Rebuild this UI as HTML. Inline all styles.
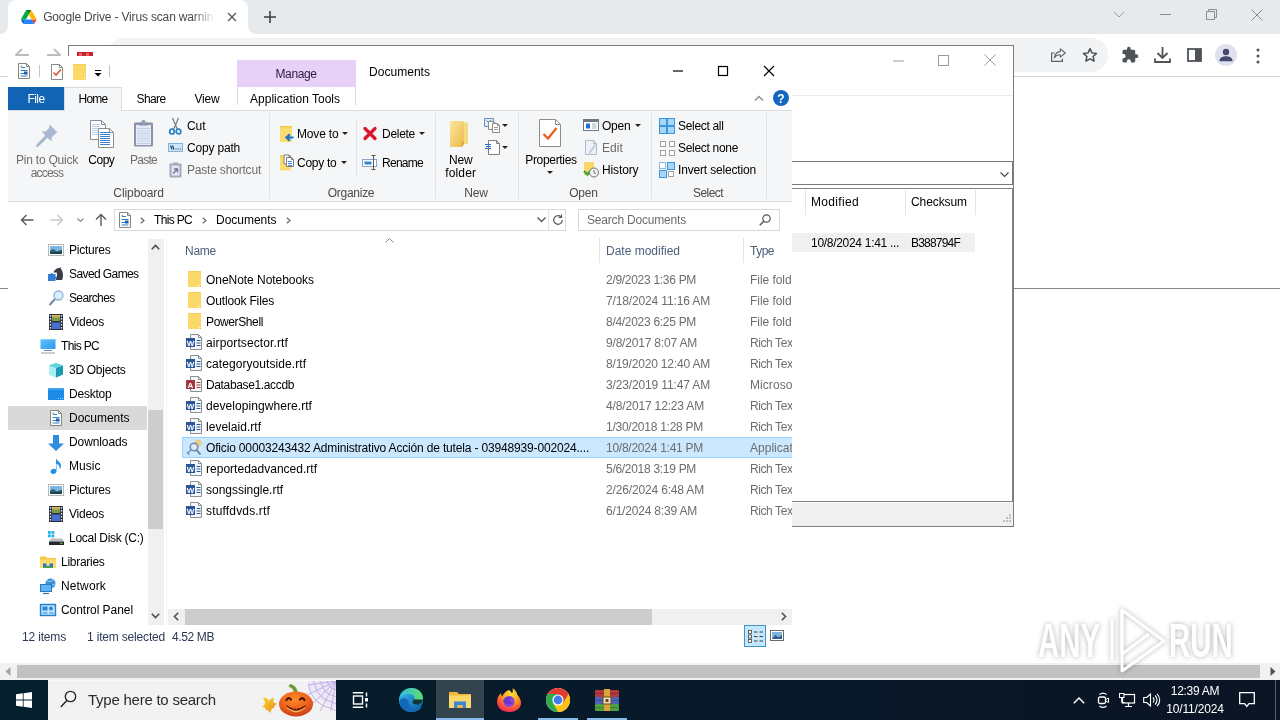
<!DOCTYPE html>
<html lang="en">
<head>
<meta charset="utf-8">
<title>Google Drive - Virus scan warning</title>
<style>
*{box-sizing:border-box;margin:0;padding:0}
html,body{width:1280px;height:720px;overflow:hidden;background:#fff}
body{position:relative;font-family:"Liberation Sans",sans-serif;font-size:12px;color:#000}
.a{position:absolute}
.t{position:absolute;white-space:nowrap;line-height:16px;height:16px}
svg{position:absolute;overflow:visible}
.w{position:absolute;overflow:hidden}
#root{position:absolute;left:0;top:0;width:1280px;height:720px;will-change:transform}

</style>
</head>
<body>
<div id="root">
<!-- CHROME -->
<div class="a" style="left:0px;top:0px;width:1280px;height:34px;background:#e7eaed;"></div>
<div class="a" style="left:8px;top:0;width:240px;height:34px;background:#fff;border-radius:8px 8px 0 0"></div>
<svg style="left:0;top:26px" width="8" height="8"><path d="M8 0v8H0a8 8 0 0 0 8-8z" fill="#fff"/></svg>
<svg style="left:248px;top:26px" width="8" height="8"><path d="M0 0v8h8a8 8 0 0 1-8-8z" fill="#fff"/></svg>
<svg style="left:21px;top:9.5px" width="15.500" height="14" viewBox="0 0 87.3 78"><path d="M6.6 66.85l3.85 6.65c.8 1.4 1.95 2.5 3.3 3.3L27.5 53H0c0 1.55.4 3.1 1.2 4.5z" fill="#0066da"/><path d="M43.65 25L29.9 1.2c-1.35.8-2.5 1.9-3.3 3.3L1.2 48.5C.4 49.9 0 51.45 0 53h27.5z" fill="#00ac47"/><path d="M73.55 76.8c1.35-.8 2.5-1.9 3.3-3.3l1.6-2.75L86.1 57.5c.8-1.4 1.2-2.95 1.2-4.5H59.8l5.85 11.5z" fill="#ea4335"/><path d="M43.65 25L57.4 1.2C56.05.4 54.5 0 52.9 0H34.4c-1.6 0-3.15.45-4.5 1.2z" fill="#00832d"/><path d="M59.8 53H27.5L13.75 76.8c1.35.8 2.9 1.2 4.5 1.2h50.8c1.6 0 3.15-.45 4.5-1.2z" fill="#2684fc"/><path d="M73.4 26.5L60.7 4.5c-.8-1.4-1.95-2.5-3.3-3.3L43.65 25 59.8 53h27.45c0-1.55-.4-3.1-1.2-4.5z" fill="#ffba00"/></svg>
<span class="t" style="left:43.20px;top:8.50px;letter-spacing:-0.162px;color:#45494d;-webkit-mask-image:linear-gradient(90deg,#000 150px,transparent 172px);mask-image:linear-gradient(90deg,#000 150px,transparent 172px);">Google Drive - Virus scan warnin</span>
<svg style="left:227px;top:12px" width="10" height="10" viewBox="0 0 10 10"><path d="M1 1l8 8M9 1l-8 8" stroke="#5f6368" stroke-width="1.5" fill="none"/></svg>
<svg style="left:263px;top:10px" width="14" height="14" viewBox="0 0 14 14"><path d="M7 1v12M1 7h12" stroke="#3c4043" stroke-width="1.6" fill="none"/></svg>
<svg style="left:1113px;top:11px" width="12" height="8" viewBox="0 0 12 8"><path d="M1 1l5 5 5-5" stroke="#9a9da1" stroke-width="1" fill="none"/></svg>
<svg style="left:1160px;top:14px" width="11" height="2" viewBox="0 0 11 2"><path d="M0 .5h11" stroke="#8a8d91" stroke-width="1" fill="none"/></svg>
<svg style="left:1206px;top:9px" width="11" height="11" viewBox="0 0 11 11"><path d="M.5 2.5h8v8h-8zM2.5 2.5v-2h8v8h-2" stroke="#8a8d91" stroke-width="1" fill="none"/></svg>
<svg style="left:1251px;top:9px" width="12" height="12" viewBox="0 0 12 12"><path d="M.5.5l11 11M11.500 .5l-11 11" stroke="#8a8d91" stroke-width="1" fill="none"/></svg>
<div class="a" style="left:0px;top:34px;width:1280px;height:43px;background:#fff;border-bottom:1px solid #d2d4d7"></div>
<div class="a" style="left:107px;top:38px;width:1001px;height:34px;border-radius:17px;background:#f1f3f4"></div>
<svg style="left:14px;top:47px" width="16" height="16" viewBox="0 0 16 16"><path d="M15 8H2M8 2L2 8l6 6" stroke="#babcbe" stroke-width="1.8" fill="none"/></svg>
<svg style="left:46px;top:47px" width="16" height="16" viewBox="0 0 16 16"><path d="M1 8h13M8 2l6 6-6 6" stroke="#babcbe" stroke-width="1.8" fill="none"/></svg>
<svg style="left:1051px;top:48px" width="15" height="14" viewBox="0 0 15 14"><path d="M3.500 5H.600v8.400h10.800v-3" stroke="#5f6368" stroke-width="1.200" fill="none"/><path d="M9.300 .800l5 4.200-5 4.200V6.800C6.300 6.800 4.500 7.800 3.300 10 3.700 6.500 5.800 4 9.300 3.400z" stroke="#5f6368" stroke-width="1.100" fill="none" stroke-linejoin="round"/></svg>
<svg style="left:1082px;top:47px" width="16" height="16" viewBox="0 0 24 24"><path d="M12 2.500l2.900 6.300 6.900.8-5.100 4.700 1.400 6.800L12 17.700l-6.100 3.400 1.400-6.800L2.200 9.600l6.900-.8z" stroke="#4a4d51" stroke-width="2.200" fill="none" stroke-linejoin="round"/></svg>
<svg style="left:1121px;top:46px" width="18" height="18" viewBox="0 0 24 24"><path d="M20.500 11H19V7a2 2 0 0 0-2-2h-4V3.500a2.500 2.500 0 0 0-5 0V5H4a2 2 0 0 0-2 2v3.800h1.500a2.700 2.700 0 0 1 0 5.400H2V20a2 2 0 0 0 2 2h3.800v-1.500a2.700 2.700 0 0 1 5.400 0V22H17a2 2 0 0 0 2-2v-4h1.500a2.500 2.500 0 0 0 0-5z" fill="#4f5357"/></svg>
<svg style="left:1154px;top:46px" width="17" height="18" viewBox="0 0 17 18"><path d="M8.500 1v10.500M3.500 7l5 5 5-5" stroke="#4f5357" stroke-width="1.800" fill="none"/><path d="M1 12.500V16h15v-3.500" stroke="#4f5357" stroke-width="1.800" fill="none"/></svg>
<svg style="left:1187px;top:48px" width="15" height="14" viewBox="0 0 15 14"><rect x="1" y="1" width="13" height="12" stroke="#4f5357" stroke-width="1.800" fill="none"/><rect x="8" y="1" width="6" height="12" fill="#4f5357"/></svg>
<svg style="left:1215px;top:44px" width="22" height="22" viewBox="0 0 22 22"><circle cx="11" cy="11" r="11" fill="#dfe1ee"/><circle cx="11" cy="8" r="3.200" fill="#45496b"/><path d="M4.500 16.500c0-3 4-4.200 6.500-4.200s6.500 1.200 6.500 4.200v.8h-13z" fill="#45496b"/></svg>
<svg style="left:1256px;top:48px" width="4" height="16" viewBox="0 0 4 16"><circle cx="2" cy="2" r="1.500" fill="#4f5357"/><circle cx="2" cy="8" r="1.500" fill="#4f5357"/><circle cx="2" cy="14" r="1.500" fill="#4f5357"/></svg>
<div class="a" style="left:0px;top:77px;width:1280px;height:587px;background:#fff;"></div>
<div class="a" style="left:0px;top:288px;width:1280px;height:1.3px;background:#888;"></div>
<div class="a" style="left:0px;top:663px;width:1280px;height:17px;background:#f1f1f1;"></div>
<div class="a" style="left:17px;top:665px;width:1243px;height:13px;background:#c1c1c1;"></div>
<svg style="left:5px;top:667px" width="6" height="9" viewBox="0 0 6 9"><path d="M5.500 0v9L.5 4.500z" fill="#a3a3a3"/></svg>
<svg style="left:1269.5px;top:667px" width="6" height="9" viewBox="0 0 6 9"><path d="M.5 0v9l5-4.500z" fill="#505050"/></svg>
<svg style="left:1036px;top:605px;filter:drop-shadow(0 0 2.500px rgba(0,0,0,.30))" width="200" height="72" viewBox="0 0 200 72"><g font-family="Liberation Sans, sans-serif" font-weight="bold" font-size="49" fill="#fff"><text x="0" y="0" transform="translate(2,52) scale(.6,1)">ANY</text><text x="0" y="0" transform="translate(133,52) scale(.6,1)">RUN</text></g><g fill="none" stroke="#fff" stroke-width="3" stroke-linejoin="round"><path d="M76 14v42"/><path d="M86 5L128 36 86 66z"/><path d="M86 5v44l27-20"/></g></svg>
<!-- ZIP -->
<div class="a" style="left:68px;top:45px;width:946px;height:482px;background:#fff;border:1px solid #7d7d7d"></div>
<div class="a" style="left:77px;top:52px;width:16px;height:8px;background:#c8202c;"></div>
<div class="a" style="left:79px;top:53px;width:3px;height:3px;background:#e8606a;"></div>
<div class="a" style="left:86px;top:53px;width:3px;height:3px;background:#e8606a;"></div>
<svg style="left:893px;top:59.5px" width="11" height="2" viewBox="0 0 11 2"><path d="M0 1h11" stroke="#9a9a9a" stroke-width="1" fill="none"/></svg>
<svg style="left:938px;top:55px" width="11" height="11" viewBox="0 0 11 11"><rect x=".5" y=".5" width="10" height="10" stroke="#9a9a9a" stroke-width="1" fill="none"/></svg>
<svg style="left:984px;top:54px" width="12" height="12" viewBox="0 0 12 12"><path d="M.5.500l11 11M11.500.500l-11 11" stroke="#9a9a9a" stroke-width="1" fill="none"/></svg>
<div class="a" style="left:69px;top:95px;width:944px;height:1px;background:#ececec;"></div>
<div class="a" style="left:72px;top:161px;width:941px;height:24px;background:#fff;border:1px solid #7a7a7a"></div>
<svg style="left:999.5px;top:171.5px" width="9" height="6" viewBox="0 0 9 6"><path d="M.5.500l4 4 4-4" stroke="#444" stroke-width="1.100" fill="none"/></svg>
<div class="a" style="left:72px;top:188px;width:941px;height:314px;background:#fff;border:1px solid #828282"></div>
<div class="a" style="left:805px;top:190px;width:1px;height:25px;background:#e5e5e5;"></div>
<div class="a" style="left:905px;top:190px;width:1px;height:25px;background:#e5e5e5;"></div>
<div class="a" style="left:975px;top:190px;width:1px;height:25px;background:#e5e5e5;"></div>
<span class="t" style="left:811.00px;top:193.50px;letter-spacing:0.330px;">Modified</span>
<span class="t" style="left:911.00px;top:193.50px;letter-spacing:-0.086px;">Checksum</span>
<div class="a" style="left:73px;top:233px;width:902px;height:19px;background:#f0f0f0;"></div>
<span class="t" style="left:811.00px;top:234.50px;letter-spacing:-0.297px;">10/8/2024 1:41 ...</span>
<span class="t" style="left:911.00px;top:234.50px;letter-spacing:-0.795px;">B388794F</span>
<div class="a" style="left:69px;top:502px;width:944px;height:24px;background:#f0f0f0;border-top:1px solid #fbfbfb"></div>
<svg style="left:1001px;top:514px" width="10" height="10" viewBox="0 0 10 10"><rect x="8" y="0" width="2" height="2" fill="#bfbfbf"/><rect x="8" y="3" width="2" height="2" fill="#bfbfbf"/><rect x="8" y="6" width="2" height="2" fill="#bfbfbf"/><rect x="5" y="3" width="2" height="2" fill="#bfbfbf"/><rect x="5" y="6" width="2" height="2" fill="#bfbfbf"/><rect x="2" y="6" width="2" height="2" fill="#bfbfbf"/></svg>
<!-- EXPLORER -->
<div class="a" style="left:8px;top:56px;width:784px;height:595px;background:#fff;"></div>
<svg style="left:18px;top:63px" width="12" height="16" viewBox="0 0 12 16"><path d="M.500 .500h8l3 3v12h-11z" fill="#fff" stroke="#8d8478" stroke-width="1"/><path d="M8.500 .500v3h3" fill="none" stroke="#8d8478" stroke-width="1"/><path d="M3 4.500h4M2.500 7.500h7M2.500 10.500h7M2.500 13h7" stroke="#2f7fd0" stroke-width="1.200"/><path d="M6 8.500h3.500v3H6z" fill="#1e5fae"/><path d="M4 2.500l-1.500 1.500" stroke="#2f7fd0" stroke-width="1"/></svg>
<div class="a" style="left:39px;top:65px;width:1px;height:12px;background:#c4c4c4;"></div>
<svg style="left:51px;top:64px" width="12" height="16" viewBox="0 0 12 16"><path d="M.500 .500h8l3 3v12h-11z" fill="#fff" stroke="#8a8a8a" stroke-width="1"/><path d="M8.500 .500v3h3" fill="none" stroke="#8a8a8a" stroke-width="1"/><path d="M2.500 8.500l2.500 2.500 5-5.500" stroke="#e0563a" stroke-width="1.600" fill="none"/></svg>
<svg style="left:73px;top:64px" width="13" height="16" viewBox="0 0 13 16"><path d="M0 0h13 v14 h-2 v2 H0z" fill="#fbd968"/><path d="M13 14v2h-2" fill="#e9b93f"/><path d="M0 0h13v1H0z" fill="#f5cf58"/></svg>
<svg style="left:94px;top:70px" width="8" height="7" viewBox="0 0 8 7"><path d="M1 .500h6" stroke="#000" stroke-width="1"/><path d="M.500 3h7L4 6.500z" fill="#000"/></svg>
<div class="a" style="left:109px;top:65px;width:1px;height:12px;background:#c4c4c4;"></div>
<div class="a" style="left:237px;top:60px;width:119px;height:27px;background:#e8d1f8;"></div>
<span class="t" style="left:275.50px;top:66.00px;letter-spacing:-0.393px;color:#2a1a3a;">Manage</span>
<span class="t" style="left:369.00px;top:64.00px;letter-spacing:0.035px;">Documents</span>
<svg style="left:673px;top:70.4px" width="10" height="2" viewBox="0 0 10 2"><path d="M0 1h10" stroke="#000" stroke-width="1.200"/></svg>
<svg style="left:718px;top:66px" width="10" height="10" viewBox="0 0 10 10"><rect x=".500" y=".500" width="9" height="9" stroke="#000" stroke-width="1.200" fill="none"/></svg>
<svg style="left:764px;top:66px" width="10" height="10" viewBox="0 0 10 10"><path d="M0 0l10 10M10 0L0 10" stroke="#000" stroke-width="1.200"/></svg>
<div class="a" style="left:8px;top:87px;width:56px;height:23px;background:#1164b4;"></div>
<span class="t" style="left:27.50px;top:90.50px;letter-spacing:-0.586px;color:#fff;">File</span>
<div class="a" style="left:64px;top:87px;width:58px;height:24px;background:#f5f6f7;border:1px solid #dadbdc;border-bottom:none"></div>
<span class="t" style="left:78.50px;top:90.50px;letter-spacing:-0.754px;">Home</span>
<span class="t" style="left:136.50px;top:90.50px;letter-spacing:-0.603px;">Share</span>
<span class="t" style="left:194.50px;top:90.50px;letter-spacing:-0.199px;">View</span>
<div class="a" style="left:237px;top:87px;width:119px;height:18px;border-left:1px solid #e4d3f0;border-right:1px solid #e4d3f0"></div>
<span class="t" style="left:250.00px;top:90.50px;letter-spacing:0.010px;">Application Tools</span>
<svg style="left:754px;top:95px" width="10" height="6" viewBox="0 0 10 6"><path d="M1 5.500l4-4 4 4" stroke="#8a8a8a" stroke-width="1.300" fill="none"/></svg>
<svg style="left:773px;top:90px" width="16" height="16" viewBox="0 0 16 16"><circle cx="8" cy="8" r="8" fill="#1467c0"/><text x="8" y="12.500" text-anchor="middle" font-family="Liberation Sans, sans-serif" font-weight="bold" font-size="12" fill="#fff">?</text></svg>
<div class="a" style="left:8px;top:110px;width:784px;height:92px;background:#f5f6f7;border-top:1px solid #dadbdc;border-bottom:1px solid #dadbdc"></div>
<div class="a" style="left:65px;top:110px;width:56px;height:1px;background:#f5f6f7;"></div>
<div class="a" style="left:269px;top:113px;width:1px;height:86px;background:#e2e3e4;"></div>
<div class="a" style="left:435px;top:113px;width:1px;height:86px;background:#e2e3e4;"></div>
<div class="a" style="left:518px;top:113px;width:1px;height:86px;background:#e2e3e4;"></div>
<div class="a" style="left:651px;top:113px;width:1px;height:86px;background:#e2e3e4;"></div>
<div class="a" style="left:766px;top:113px;width:1px;height:86px;background:#e2e3e4;"></div>
<div class="a" style="left:356px;top:120px;width:1px;height:56px;background:#e2e3e4;"></div>
<svg style="left:36px;top:123.5px" width="22" height="23" viewBox="0 0 22 23"><path d="M13.500 .500l8 8-2.200 1.200-3.800 3.800 .300 4-4.300-3.800L2.500 22.500 0 23l.500-2.500 8.800-9-3.800-4.300 4 .300 3.800-3.800z" fill="#a9b8d0"/></svg>
<span class="t" style="left:16.00px;top:151.50px;letter-spacing:-0.223px;color:#6d6d6d;">Pin to Quick</span>
<span class="t" style="left:30.75px;top:164.50px;letter-spacing:-0.807px;color:#6d6d6d;">access</span>
<svg style="left:89px;top:119px" width="26" height="30" viewBox="0 0 26 30"><path d="M1.5 1.5h11l4 4v15h-15z" fill="#fff" stroke="#8c8c8c" stroke-width="1"/><path d="M12.5 1.5v4h4" fill="none" stroke="#8c8c8c" stroke-width="1"/><path d="M3 5.5h8" stroke="#b5cdea" stroke-width="1"/><path d="M3 7.5h8" stroke="#b5cdea" stroke-width="1"/><path d="M3 9.5h8" stroke="#b5cdea" stroke-width="1"/><path d="M3 11.5h8" stroke="#b5cdea" stroke-width="1"/><path d="M3 13.5h8" stroke="#b5cdea" stroke-width="1"/><path d="M3 15.5h8" stroke="#b5cdea" stroke-width="1"/><path d="M9.5 9.5h11l4 4v15h-15z" fill="#fff" stroke="#8c8c8c" stroke-width="1"/><path d="M20.5 9.5v4h4" fill="none" stroke="#8c8c8c" stroke-width="1"/><path d="M11 13.5h10" stroke="#3b7fd0" stroke-width="1"/><path d="M11 15.5h10" stroke="#3b7fd0" stroke-width="1"/><path d="M11 17.5h10" stroke="#3b7fd0" stroke-width="1"/><path d="M11 19.5h10" stroke="#3b7fd0" stroke-width="1"/><path d="M11 21.5h10" stroke="#3b7fd0" stroke-width="1"/><path d="M11 23.5h10" stroke="#3b7fd0" stroke-width="1"/><path d="M11 25.5h10" stroke="#3b7fd0" stroke-width="1"/></svg>
<span class="t" style="left:88.30px;top:151.50px;letter-spacing:-0.504px;">Copy</span>
<svg style="left:133px;top:119px" width="21" height="29" viewBox="0 0 21 29"><rect x="1" y="3.500" width="19" height="24" rx="1" fill="#8c93aa"/><rect x="3" y="6" width="15" height="20" fill="#e6ebf8"/><path d="M4 9.5h13" stroke="#c4cde6" stroke-width="1"/><path d="M4 12h13" stroke="#c4cde6" stroke-width="1"/><path d="M4 14.5h13" stroke="#c4cde6" stroke-width="1"/><path d="M4 17h13" stroke="#c4cde6" stroke-width="1"/><path d="M4 19.5h13" stroke="#c4cde6" stroke-width="1"/><path d="M4 22h13" stroke="#c4cde6" stroke-width="1"/><path d="M4 24.5h13" stroke="#c4cde6" stroke-width="1"/><path d="M6 3.500h9v3H6z" fill="#8c93aa"/><rect x="8.500" y="1" width="4" height="3.500" rx="1.500" fill="#9aa1b6"/></svg>
<span class="t" style="left:130.00px;top:151.50px;letter-spacing:-0.734px;color:#6d6d6d;">Paste</span>
<svg style="left:169px;top:118px" width="13" height="17" viewBox="0 0 13 17"><path d="M3.500 0L8 10.500M9.500 0L5 10.500" stroke="#7a7f88" stroke-width="1.300" fill="none"/><ellipse cx="3" cy="13.500" rx="2.300" ry="2.500" fill="none" stroke="#2a7ec0" stroke-width="1.700"/><ellipse cx="9.500" cy="13.500" rx="2.300" ry="2.500" fill="none" stroke="#2a7ec0" stroke-width="1.700"/><path d="M5 10.500l-1 1M8 10.500l1 1" stroke="#2a7ec0" stroke-width="1.500"/></svg>
<span class="t" style="left:187.00px;top:118.00px;letter-spacing:-0.057px;">Cut</span>
<svg style="left:168px;top:143px" width="15" height="9" viewBox="0 0 15 9"><rect x=".500" y=".500" width="14" height="8" fill="#cfe5f8" stroke="#86b4d8" stroke-width="1"/><path d="M2.500 2.500l1.500 4M4.500 2.500l1.500 4" stroke="#1d3f66" stroke-width="1.100"/><path d="M7.500 6h1M9.700 6h1M11.900 6h1" stroke="#1d3f66" stroke-width="1.200"/></svg>
<span class="t" style="left:187.00px;top:140.00px;letter-spacing:-0.188px;">Copy path</span>
<svg style="left:169px;top:162px" width="13" height="16" viewBox="0 0 13 16"><rect x=".500" y="1.500" width="12" height="14" rx="1" fill="#a4a8bd"/><rect x="2.500" y="3.500" width="8" height="10" fill="#e3e6f2"/><path d="M4 .500h5v2.500H4z" fill="#a4a8bd"/><path d="M4 11.500l4-4M5 7h3.500v3.500" stroke="#6f7592" stroke-width="1.300" fill="none"/></svg>
<span class="t" style="left:187.00px;top:162.00px;letter-spacing:-0.191px;color:#6d6d6d;">Paste shortcut</span>
<span class="t" style="left:113.35px;top:184.50px;letter-spacing:-0.097px;color:#4a4a4a;">Clipboard</span>
<svg style="left:279px;top:125px" width="15" height="18" viewBox="0 0 15 18"><path d="M1 1h12v16H1z" fill="#fbdc72"/><path d="M1 1h12v1.500H1z" fill="#f2c94e"/><path d="M14.500 12.500H8M10.800 9.300l-3.300 3.200 3.300 3.200" stroke="#1d73d0" stroke-width="2.200" fill="none"/></svg>
<span class="t" style="left:297.00px;top:125.50px;letter-spacing:-0.167px;">Move to</span>
<svg style="left:342px;top:132px" width="6" height="3" viewBox="0 0 6 3"><path d="M0 0h6L3 3z" fill="#222"/></svg>
<svg style="left:279px;top:154px" width="16" height="17" viewBox="0 0 16 17"><path d="M1 1.500h11v15H1z" fill="#fbdc72"/><path d="M1 1.500h11v1.500H1z" fill="#f2c94e"/><path d="M5 1h5l2 2v7h-7z" fill="#fff" stroke="#7d7d7d" stroke-width="1"/><path d="M10 1v2h2" fill="none" stroke="#7d7d7d" stroke-width="1"/><path d="M7.5 3.5h5l2 2v7h-7z" fill="#fff" stroke="#7d7d7d" stroke-width="1"/><path d="M12.5 3.5v2h2" fill="none" stroke="#7d7d7d" stroke-width="1"/><path d="M9 7.500h4M9 9.500h4M9 11.500h4" stroke="#3b7fd0" stroke-width=".900"/></svg>
<span class="t" style="left:297.00px;top:154.50px;letter-spacing:-0.263px;">Copy to</span>
<svg style="left:340.5px;top:161px" width="6" height="3" viewBox="0 0 6 3"><path d="M0 0h6L3 3z" fill="#222"/></svg>
<svg style="left:363px;top:127px" width="14" height="13" viewBox="0 0 14 13"><path d="M2 1.500l10 10M12 1.500l-10 10" stroke="#d9142b" stroke-width="3.300" stroke-linecap="round"/></svg>
<span class="t" style="left:382.00px;top:125.50px;letter-spacing:-0.281px;">Delete</span>
<svg style="left:419px;top:132px" width="6" height="3" viewBox="0 0 6 3"><path d="M0 0h6L3 3z" fill="#222"/></svg>
<svg style="left:362px;top:155px" width="16" height="15" viewBox="0 0 16 15"><rect x=".500" y="4.500" width="14" height="7" fill="#fff" stroke="#8aa4c4" stroke-width="1"/><rect x="2.500" y="6.500" width="7" height="3" fill="#2f86d6"/><path d="M11.500 .500v14M9.500 .500h4M9.500 14.500h4" stroke="#555" stroke-width="1"/></svg>
<span class="t" style="left:382.00px;top:154.50px;letter-spacing:-0.727px;">Rename</span>
<span class="t" style="left:327.75px;top:184.50px;letter-spacing:-0.273px;color:#4a4a4a;">Organize</span>
<svg style="left:449px;top:120px" width="20" height="28" viewBox="0 0 20 28"><defs><linearGradient id="nfg" x1="0" y1="0" x2="1" y2="1"><stop offset="0" stop-color="#fde69a"/><stop offset="1" stop-color="#e9b84a"/></linearGradient></defs><path d="M1 1h13l1.500 1.500V24l-2.500 3H1z" fill="url(#nfg)"/><path d="M13 27V22h2.500" fill="#d9a53a"/><path d="M15.500 2.500h3.500V24h-3.500z" fill="#f7d87a"/></svg>
<span class="t" style="left:448.95px;top:151.50px;letter-spacing:-0.172px;">New</span>
<span class="t" style="left:445.20px;top:164.50px;letter-spacing:0.164px;">folder</span>
<svg style="left:484px;top:117px" width="17" height="16" viewBox="0 0 17 16"><path d="M0.5 1.5h9l0 0v8h-9z" fill="#dcecfb" stroke="#6f8fb5" stroke-width="1"/><path d="M9.5 1.5v0h0" fill="none" stroke="#6f8fb5" stroke-width="1"/><path d="M2.500 3.500l2 2 2.500-2.500" stroke="#3b6ea8" stroke-width=".900" fill="none"/><path d="M4.5 4.5h5l2 2v6h-7z" fill="#fff" stroke="#8a8a8a" stroke-width="1"/><path d="M9.5 4.5v2h2" fill="none" stroke="#8a8a8a" stroke-width="1"/><path d="M8.5 6.5h5l2 2v7h-7z" fill="#fff" stroke="#8a8a8a" stroke-width="1"/><path d="M13.5 6.5v2h2" fill="none" stroke="#8a8a8a" stroke-width="1"/><path d="M10 10.500h4M10 12.500h4" stroke="#c77a6a" stroke-width=".900"/></svg>
<svg style="left:502px;top:123.5px" width="6" height="3" viewBox="0 0 6 3"><path d="M0 0h6L3 3z" fill="#222"/></svg>
<svg style="left:485px;top:140px" width="15" height="16" viewBox="0 0 15 16"><path d="M3.5 0.5h8l3 3v11h-11z" fill="#fff" stroke="#7d7d7d" stroke-width="1"/><path d="M11.5 0.5v3h3" fill="none" stroke="#7d7d7d" stroke-width="1"/><path d="M0 4.500h6M1 6.500h5M0 8.500h6" stroke="#2d6fc0" stroke-width="1.100"/></svg>
<svg style="left:502px;top:145.5px" width="6" height="3" viewBox="0 0 6 3"><path d="M0 0h6L3 3z" fill="#222"/></svg>
<span class="t" style="left:464.25px;top:184.50px;letter-spacing:-0.172px;color:#4a4a4a;">New</span>
<svg style="left:539px;top:119px" width="22" height="28" viewBox="0 0 22 28"><path d="M0.5 0.5h16l5 5v22h-21z" fill="#fff" stroke="#8c8c8c" stroke-width="1"/><path d="M16.5 0.5v5h5" fill="none" stroke="#8c8c8c" stroke-width="1"/><path d="M4.500 15l4.500 4.500L17.500 9" stroke="#e8601c" stroke-width="2.300" fill="none"/></svg>
<span class="t" style="left:525.25px;top:151.50px;letter-spacing:-0.319px;">Properties</span>
<svg style="left:547px;top:170.5px" width="6" height="3" viewBox="0 0 6 3"><path d="M0 0h6L3 3z" fill="#222"/></svg>
<svg style="left:583px;top:119px" width="16" height="12" viewBox="0 0 16 12"><rect x=".500" y=".500" width="15" height="11" fill="#fff" stroke="#6d7683" stroke-width="1"/><rect x="1" y="1" width="14" height="2" fill="#6d7683"/><rect x="3" y="4.500" width="4" height="5" fill="#1d6fd6"/><path d="M9 5h4.500M9 7h4.500M9 9h4.500" stroke="#9aa" stroke-width=".900"/></svg>
<span class="t" style="left:602.00px;top:118.00px;letter-spacing:-0.211px;">Open</span>
<svg style="left:635px;top:123.5px" width="6" height="3" viewBox="0 0 6 3"><path d="M0 0h6L3 3z" fill="#222"/></svg>
<svg style="left:584px;top:140px" width="14" height="16" viewBox="0 0 14 16"><path d="M1.5 0.5h8l3 3v11h-11z" fill="#eef1f8" stroke="#b4bccc" stroke-width="1"/><path d="M9.5 0.5v3h3" fill="none" stroke="#b4bccc" stroke-width="1"/><path d="M12.500 5l-6 8-2 .800 .500-2 6-8z" fill="#c5cbe0"/></svg>
<span class="t" style="left:602.00px;top:140.00px;letter-spacing:0.082px;color:#6d6d6d;">Edit</span>
<svg style="left:583px;top:162px" width="16" height="16" viewBox="0 0 16 16"><path d="M1 0h10v13H1z" fill="#f9d769"/><path d="M1 9l3.500 3.500 4-5" stroke="#3aa335" stroke-width="2.200" fill="none"/><circle cx="11" cy="10.500" r="4.500" fill="#f4f4f4" stroke="#6f6f6f" stroke-width="1"/><path d="M11 8v2.700l1.800 1" stroke="#555" stroke-width=".900" fill="none"/></svg>
<span class="t" style="left:602.00px;top:162.00px;letter-spacing:-0.121px;">History</span>
<span class="t" style="left:569.25px;top:184.50px;letter-spacing:-0.211px;color:#4a4a4a;">Open</span>
<svg style="left:659px;top:118px" width="16" height="16" viewBox="0 0 16 16"><rect x="0.5" y="0.5" width="7" height="7" fill="#a9d5f7" stroke="#3a97de" stroke-width="1"/><rect x="0.5" y="8.5" width="7" height="7" fill="#a9d5f7" stroke="#3a97de" stroke-width="1"/><rect x="8.5" y="0.5" width="7" height="7" fill="#a9d5f7" stroke="#3a97de" stroke-width="1"/><rect x="8.5" y="8.5" width="7" height="7" fill="#a9d5f7" stroke="#3a97de" stroke-width="1"/></svg>
<span class="t" style="left:678.00px;top:118.00px;letter-spacing:-0.319px;">Select all</span>
<svg style="left:659.5px;top:140.5px" width="15" height="15" viewBox="0 0 15 15"><rect x="0.5" y="0.5" width="5" height="5" fill="#fff" stroke="#a0a0a0" stroke-width="1"/><rect x="0.5" y="9.5" width="5" height="5" fill="#fff" stroke="#a0a0a0" stroke-width="1"/><rect x="9.5" y="0.5" width="5" height="5" fill="#fff" stroke="#a0a0a0" stroke-width="1"/><rect x="9.5" y="9.5" width="5" height="5" fill="#fff" stroke="#a0a0a0" stroke-width="1"/></svg>
<span class="t" style="left:678.00px;top:140.00px;letter-spacing:-0.305px;">Select none</span>
<svg style="left:659px;top:162px" width="16" height="16" viewBox="0 0 16 16"><rect x="0.5" y="0.5" width="6" height="6" fill="#fff" stroke="#8eb8dc" stroke-width="1"/><rect x="8.5" y="0.5" width="7" height="7" fill="#a9d5f7" stroke="#3a97de" stroke-width="1"/><rect x="0.5" y="8.5" width="7" height="7" fill="#a9d5f7" stroke="#3a97de" stroke-width="1"/><rect x="9.5" y="9.5" width="5" height="5" fill="#fff" stroke="#a0a0a0" stroke-width="1"/></svg>
<span class="t" style="left:678.00px;top:162.00px;letter-spacing:-0.168px;">Invert selection</span>
<span class="t" style="left:693.00px;top:184.50px;letter-spacing:-0.557px;color:#4a4a4a;">Select</span>
<svg style="left:20px;top:214px" width="14" height="12" viewBox="0 0 14 12"><path d="M13.500 6H1.500M6.500 1L1.500 6l5 5" stroke="#5a5a5a" stroke-width="1.400" fill="none"/></svg>
<svg style="left:50px;top:214px" width="14" height="12" viewBox="0 0 14 12"><path d="M.500 6h12M7.500 1l5 5-5 5" stroke="#c8c8c8" stroke-width="1.400" fill="none"/></svg>
<svg style="left:77px;top:218px" width="7" height="5" viewBox="0 0 7 5"><path d="M.500 .500l3 3 3-3" stroke="#8a8a8a" stroke-width="1.200" fill="none"/></svg>
<svg style="left:95px;top:213px" width="12" height="13" viewBox="0 0 12 13"><path d="M6 13V1.500M1 6.500l5-5 5 5" stroke="#5a5a5a" stroke-width="1.400" fill="none"/></svg>
<div class="a" style="left:114px;top:209px;width:452px;height:22px;background:#fff;border:1px solid #d9d9d9"></div>
<div class="a" style="left:548px;top:210px;width:1px;height:20px;background:#e5e5e5;"></div>
<svg style="left:119px;top:212px" width="12" height="16" viewBox="0 0 12 16"><path d="M.500 .500h8l3 3v12h-11z" fill="#fff" stroke="#8d8478" stroke-width="1"/><path d="M8.500 .500v3h3" fill="none" stroke="#8d8478" stroke-width="1"/><path d="M3 4.500h4M2.500 7.500h7M2.500 10.500h7M2.500 13h7" stroke="#2f7fd0" stroke-width="1.200"/><path d="M6 8.500h3.500v3H6z" fill="#1e5fae"/><path d="M4 2.500l-1.500 1.500" stroke="#2f7fd0" stroke-width="1"/></svg>
<svg style="left:139.5px;top:216.5px" width="5" height="7" viewBox="0 0 5 7"><path d="M.800 .800L4 3.500 .800 6.200" stroke="#6a6a6a" stroke-width="1.200" fill="none"/></svg>
<span class="t" style="left:154.00px;top:211.50px;letter-spacing:-0.667px;">This PC</span>
<svg style="left:202px;top:216.5px" width="5" height="7" viewBox="0 0 5 7"><path d="M.800 .800L4 3.500 .800 6.200" stroke="#6a6a6a" stroke-width="1.200" fill="none"/></svg>
<span class="t" style="left:216.00px;top:211.50px;letter-spacing:-0.021px;">Documents</span>
<svg style="left:286px;top:216.5px" width="5" height="7" viewBox="0 0 5 7"><path d="M.800 .800L4 3.500 .800 6.200" stroke="#6a6a6a" stroke-width="1.200" fill="none"/></svg>
<svg style="left:537px;top:217px" width="9" height="6" viewBox="0 0 9 6"><path d="M.500 .500l4 4 4-4" stroke="#555" stroke-width="1.300" fill="none"/></svg>
<svg style="left:552px;top:214px" width="12" height="12" viewBox="0 0 12 12"><path d="M10.300 6a4.300 4.300 0 1 1-1.500-3.300" stroke="#555" stroke-width="1.200" fill="none"/><path d="M9.500 .500v3h-3" stroke="#555" stroke-width="1.200" fill="none"/></svg>
<div class="a" style="left:578px;top:209px;width:202px;height:22px;background:#fff;border:1px solid #d9d9d9"></div>
<span class="t" style="left:587.00px;top:211.50px;letter-spacing:-0.189px;color:#6d6d6d;">Search Documents</span>
<svg style="left:759px;top:214px" width="12" height="12" viewBox="0 0 12 12"><circle cx="7.500" cy="4.500" r="3.700" stroke="#555" stroke-width="1.200" fill="none"/><path d="M4.800 7.200L.800 11.200" stroke="#555" stroke-width="1.500"/></svg>
<div class="a" style="left:8px;top:406px;width:138.5px;height:23.8px;background:#d9d9d9;"></div>
<svg style="left:48px;top:242px" width="16" height="16" viewBox="0 0 16 16"><rect x=".500" y="2.500" width="15" height="11" fill="#fff" stroke="#b9b9b9" stroke-width="1"/><rect x="2" y="4" width="12" height="8" fill="#79b6e4"/><path d="M2 12V9l3-2 4 2.500 5-2V12z" fill="#2c5f6e"/><path d="M2 12v-1.500l12-1V12z" fill="#1f4450"/></svg>
<span class="t" style="left:69.00px;top:242.00px;letter-spacing:-0.230px;">Pictures</span>
<svg style="left:48px;top:266px" width="16" height="16" viewBox="0 0 16 16"><path d="M8 14c0-3 1.500-4 1-6.500C8.500 6 7.500 6 7 7L5.500 6C7 3.500 9 1.500 11.500 2l1-1 .500 2c1.500 1.500 2 4 2 6.500 0 2-.500 3-1 4.500z" fill="#3a3d45"/><path d="M0 8h2.500c0-1.500 2.500-1.500 2.500 0H7.500v2.500c1.500 0 1.500 2.500 0 2.500V15H0z" fill="#2f7fd4"/></svg>
<span class="t" style="left:69.00px;top:266.00px;letter-spacing:-0.592px;">Saved Games</span>
<svg style="left:48px;top:290px" width="16" height="16" viewBox="0 0 16 16"><circle cx="10.500" cy="5.500" r="4.500" fill="#dbeefb" stroke="#8fb4d6" stroke-width="1.300"/><path d="M7 9L1.500 15" stroke="#6f88a8" stroke-width="2"/></svg>
<span class="t" style="left:69.00px;top:290.00px;letter-spacing:-0.648px;">Searches</span>
<svg style="left:48px;top:314px" width="16" height="16" viewBox="0 0 16 16"><rect x="1" y="0" width="14" height="16" fill="#2a3040"/><rect x="4" y="1" width="8" height="6" fill="#7d9a4a"/><rect x="4" y="1" width="8" height="2.500" fill="#c9b25a"/><rect x="4" y="8.500" width="8" height="6.500" fill="#4a6fd0"/><rect x="1.800" y="1" width="1.400" height="1.600" fill="#e6e6e6"/><rect x="12.800" y="1" width="1.400" height="1.600" fill="#e6e6e6"/><rect x="1.800" y="4" width="1.400" height="1.600" fill="#e6e6e6"/><rect x="12.800" y="4" width="1.400" height="1.600" fill="#e6e6e6"/><rect x="1.800" y="7" width="1.400" height="1.600" fill="#e6e6e6"/><rect x="12.800" y="7" width="1.400" height="1.600" fill="#e6e6e6"/><rect x="1.800" y="10" width="1.400" height="1.600" fill="#e6e6e6"/><rect x="12.800" y="10" width="1.400" height="1.600" fill="#e6e6e6"/><rect x="1.800" y="13" width="1.400" height="1.600" fill="#e6e6e6"/><rect x="12.800" y="13" width="1.400" height="1.600" fill="#e6e6e6"/></svg>
<span class="t" style="left:69.00px;top:314.00px;letter-spacing:-0.245px;">Videos</span>
<svg style="left:40px;top:338px" width="16" height="18" viewBox="0 0 16 18"><defs><linearGradient id="pcg" x1="0" y1="0" x2="1" y2="1"><stop offset="0" stop-color="#62c1fb"/><stop offset="1" stop-color="#2b98ec"/></linearGradient></defs><rect x=".500" y="1.300" width="15" height="9.700" fill="url(#pcg)"/><path d="M4 12.500h8" stroke="#5a8fc0" stroke-width="1"/><path d="M1 15h14" stroke="#9a9a9a" stroke-width="1"/></svg>
<span class="t" style="left:61.00px;top:338.00px;letter-spacing:-0.667px;">This PC</span>
<svg style="left:48px;top:362px" width="16" height="16" viewBox="0 0 16 16"><path d="M8 1l7 2.500v9L8 15.500 1 12.500v-9z" fill="#8fe3ea"/><path d="M8 6l7-2.500v9L8 15.500z" fill="#1c9bb4"/><path d="M8 6L1 3.500v9l7 3z" fill="#aeeef2"/><path d="M1 3.500L8 1l7 2.500L8 6z" fill="#5fd0dc"/></svg>
<span class="t" style="left:69.00px;top:362.00px;letter-spacing:-0.284px;">3D Objects</span>
<svg style="left:48px;top:386px" width="16" height="16" viewBox="0 0 16 16"><rect x="0" y="2" width="16" height="12" fill="#1b8be6"/><rect x="0" y="2" width="16" height="2" fill="#3fa2f0"/><path d="M10 12.500h1M12 12.500h1M14 12.500h1" stroke="#9fd0fa" stroke-width="1"/></svg>
<span class="t" style="left:69.00px;top:386.00px;letter-spacing:-0.217px;">Desktop</span>
<svg style="left:50px;top:410px" width="12" height="16" viewBox="0 0 12 16"><path d="M.500 .500h8l3 3v12h-11z" fill="#fff" stroke="#8d8478" stroke-width="1"/><path d="M8.500 .500v3h3" fill="none" stroke="#8d8478" stroke-width="1"/><path d="M3 4.500h4M2.500 7.500h7M2.500 10.500h7M2.500 13h7" stroke="#2f7fd0" stroke-width="1.200"/><path d="M6 8.500h3.500v3H6z" fill="#1e5fae"/><path d="M4 2.500l-1.500 1.500" stroke="#2f7fd0" stroke-width="1"/></svg>
<span class="t" style="left:69.00px;top:410.00px;letter-spacing:-0.021px;">Documents</span>
<svg style="left:48px;top:434.5px" width="16" height="16" viewBox="0 0 16 16"><path d="M5 0h6v8.500h5L8 16 0 8.500h5z" fill="#2e8fe2"/></svg>
<span class="t" style="left:69.00px;top:434.00px;letter-spacing:-0.097px;">Downloads</span>
<svg style="left:49px;top:458px" width="14" height="16" viewBox="0 0 14 16"><path d="M7 0c.500 3 5 3.500 5 8 0 1.500-.800 2.500-1.500 3 .500-2.500-.500-4.500-3-5.300V13c0 1.800-1.500 3-3.300 3S1.500 15 1.500 13.500 3 10.800 5 10.800c.700 0 1.400 .200 2 .500z" fill="#1e92ea"/></svg>
<span class="t" style="left:69.00px;top:458.00px;letter-spacing:0.031px;">Music</span>
<svg style="left:48px;top:482px" width="16" height="16" viewBox="0 0 16 16"><rect x=".500" y="2.500" width="15" height="11" fill="#fff" stroke="#b9b9b9" stroke-width="1"/><rect x="2" y="4" width="12" height="8" fill="#79b6e4"/><path d="M2 12V9l3-2 4 2.500 5-2V12z" fill="#2c5f6e"/><path d="M2 12v-1.500l12-1V12z" fill="#1f4450"/></svg>
<span class="t" style="left:69.00px;top:482.00px;letter-spacing:-0.230px;">Pictures</span>
<svg style="left:48px;top:506px" width="16" height="16" viewBox="0 0 16 16"><rect x="1" y="0" width="14" height="16" fill="#2a3040"/><rect x="4" y="1" width="8" height="6" fill="#7d9a4a"/><rect x="4" y="1" width="8" height="2.500" fill="#c9b25a"/><rect x="4" y="8.500" width="8" height="6.500" fill="#4a6fd0"/><rect x="1.800" y="1" width="1.400" height="1.600" fill="#e6e6e6"/><rect x="12.800" y="1" width="1.400" height="1.600" fill="#e6e6e6"/><rect x="1.800" y="4" width="1.400" height="1.600" fill="#e6e6e6"/><rect x="12.800" y="4" width="1.400" height="1.600" fill="#e6e6e6"/><rect x="1.800" y="7" width="1.400" height="1.600" fill="#e6e6e6"/><rect x="12.800" y="7" width="1.400" height="1.600" fill="#e6e6e6"/><rect x="1.800" y="10" width="1.400" height="1.600" fill="#e6e6e6"/><rect x="12.800" y="10" width="1.400" height="1.600" fill="#e6e6e6"/><rect x="1.800" y="13" width="1.400" height="1.600" fill="#e6e6e6"/><rect x="12.800" y="13" width="1.400" height="1.600" fill="#e6e6e6"/></svg>
<span class="t" style="left:69.00px;top:506.00px;letter-spacing:-0.245px;">Videos</span>
<svg style="left:48px;top:530px" width="16" height="16" viewBox="0 0 16 16"><rect x="0" y="1" width="2.800" height="2.800" fill="#21b5e8"/><rect x="3.5" y="1" width="2.800" height="2.800" fill="#21b5e8"/><rect x="0" y="4.5" width="2.800" height="2.800" fill="#21b5e8"/><rect x="3.5" y="4.5" width="2.800" height="2.800" fill="#21b5e8"/><path d="M3 8.500h11l2 3H1z" fill="#b9bec4"/><rect x="1" y="11.500" width="15" height="3.500" fill="#24282c"/><rect x="12" y="12.700" width="2.500" height="1" fill="#7bd36a"/></svg>
<span class="t" style="left:69.00px;top:530.00px;letter-spacing:-0.279px;">Local Disk (C:)</span>
<svg style="left:40px;top:554px" width="16" height="16" viewBox="0 0 16 16"><path d="M0 2.500h6l1.500 1.500H16V14H0z" fill="#f7c843"/><path d="M0 5.500h16V14H0z" fill="#fbdc72"/><path d="M3 14V9.500h3.500V12h3V9.500H13V14z" fill="#2a78d0"/><path d="M3 12.500h10V14H3z" fill="#4a9a48"/></svg>
<span class="t" style="left:61.00px;top:554.00px;letter-spacing:-0.281px;">Libraries</span>
<svg style="left:40px;top:578px" width="16" height="16" viewBox="0 0 16 16"><circle cx="10.500" cy="5.500" r="5" fill="#3d8fd8"/><path d="M7 3c2 1 4 .500 6-1M6 7c3 1 6 .500 9-1" stroke="#9cd0f5" stroke-width="1" fill="none"/><rect x=".500" y="6.500" width="11" height="7" fill="#5fb4f2" stroke="#2a7cc8" stroke-width="1"/><path d="M3 15.500h6" stroke="#2a6fb0" stroke-width="1.200"/></svg>
<span class="t" style="left:61.00px;top:578.00px;letter-spacing:0.141px;">Network</span>
<svg style="left:40px;top:602px" width="16" height="16" viewBox="0 0 16 16"><rect x=".500" y="2.500" width="15" height="11" fill="#bfe3f8" stroke="#1e7fd0" stroke-width="1.400"/><rect x="2.500" y="4.500" width="5" height="4" fill="#2f86d6"/><circle cx="11" cy="6.500" r="2" fill="#2f86d6"/><path d="M2.500 11h5M9.500 11h4" stroke="#2f86d6" stroke-width="1.200"/></svg>
<span class="t" style="left:61.00px;top:602.00px;letter-spacing:-0.054px;">Control Panel</span>
<div class="a" style="left:148px;top:238.5px;width:15.5px;height:386px;background:#f0f0f0;"></div>
<div class="a" style="left:165.5px;top:238px;width:1px;height:387px;background:#f6f6f6;"></div>
<div class="a" style="left:148px;top:410px;width:15px;height:119px;background:#cdcdcd;"></div>
<svg style="left:151px;top:244px" width="9" height="6" viewBox="0 0 9 6"><path d="M.800 5.200l3.700-3.700 3.700 3.700" stroke="#505050" stroke-width="1.600" fill="none"/></svg>
<svg style="left:151px;top:613px" width="9" height="6" viewBox="0 0 9 6"><path d="M.800 .800l3.700 3.700 3.700-3.700" stroke="#505050" stroke-width="1.600" fill="none"/></svg>
<span class="t" style="left:185.00px;top:242.50px;letter-spacing:-0.254px;color:#4c607a;">Name</span>
<span class="t" style="left:606.00px;top:242.50px;letter-spacing:-0.002px;color:#4c607a;">Date modified</span>
<span class="t" style="left:750.00px;top:242.50px;letter-spacing:-0.504px;color:#4c607a;">Type</span>
<div class="a" style="left:599px;top:238px;width:1px;height:25px;background:#e5e5e5;"></div>
<div class="a" style="left:743px;top:238px;width:1px;height:25px;background:#e5e5e5;"></div>
<svg style="left:385px;top:238px" width="9" height="5" viewBox="0 0 9 5"><path d="M.500 4.500l4-4 4 4" stroke="#8a8a8a" stroke-width="1" fill="none"/></svg>
<svg style="left:188px;top:271px" width="13" height="16" viewBox="0 0 13 16"><path d="M0 0h13 v14 h-2 v2 H0z" fill="#fbd968"/><path d="M13 14v2h-2" fill="#e9b93f"/><path d="M0 0h13v1H0z" fill="#f5cf58"/></svg>
<span class="t" style="left:206.00px;top:271.50px;letter-spacing:-0.041px;">OneNote Notebooks</span>
<span class="t" style="left:606.00px;top:271.50px;letter-spacing:-0.293px;color:#6d6d6d;">2/9/2023 1:36 PM</span>
<div class="a" style="left:750px;top:271.5px;width:42px;height:16px;overflow:hidden"><span class="t" style="left:0;top:0;color:#6d6d6d;letter-spacing:-0.057px">File folder</span></div>
<svg style="left:188px;top:292px" width="13" height="16" viewBox="0 0 13 16"><path d="M0 0h13 v14 h-2 v2 H0z" fill="#fbd968"/><path d="M13 14v2h-2" fill="#e9b93f"/><path d="M0 0h13v1H0z" fill="#f5cf58"/></svg>
<span class="t" style="left:206.00px;top:292.50px;letter-spacing:-0.155px;">Outlook Files</span>
<span class="t" style="left:606.00px;top:292.50px;letter-spacing:-0.138px;color:#6d6d6d;">7/18/2024 11:16 AM</span>
<div class="a" style="left:750px;top:292.5px;width:42px;height:16px;overflow:hidden"><span class="t" style="left:0;top:0;color:#6d6d6d;letter-spacing:-0.057px">File folder</span></div>
<svg style="left:188px;top:313px" width="13" height="16" viewBox="0 0 13 16"><path d="M0 0h13 v14 h-2 v2 H0z" fill="#fbd968"/><path d="M13 14v2h-2" fill="#e9b93f"/><path d="M0 0h13v1H0z" fill="#f5cf58"/></svg>
<span class="t" style="left:206.00px;top:313.50px;letter-spacing:-0.370px;">PowerShell</span>
<span class="t" style="left:606.00px;top:313.50px;letter-spacing:-0.293px;color:#6d6d6d;">8/4/2023 6:25 PM</span>
<div class="a" style="left:750px;top:313.5px;width:42px;height:16px;overflow:hidden"><span class="t" style="left:0;top:0;color:#6d6d6d;letter-spacing:-0.057px">File folder</span></div>
<svg style="left:186px;top:334px" width="16" height="16" viewBox="0 0 16 16"><path d="M4.5 0.5h8l3 3v12h-11z" fill="#f4f8fd" stroke="#8f8f8f" stroke-width="1"/><path d="M12.5 0.5v3h3" fill="none" stroke="#8f8f8f" stroke-width="1"/><path d="M10.500 6.500h4M10.500 9h4M10.500 11.500h4" stroke="#2b579a" stroke-width="1"/><rect x="0" y="4" width="9" height="9" fill="#2b579a"/><text x="4.500" y="11.500" text-anchor="middle" font-family="Liberation Sans, sans-serif" font-weight="bold" font-size="8" fill="#fff">W</text></svg>
<span class="t" style="left:206.00px;top:334.50px;letter-spacing:0.117px;">airportsector.rtf</span>
<span class="t" style="left:606.00px;top:334.50px;letter-spacing:-0.189px;color:#6d6d6d;">9/8/2017 8:07 AM</span>
<div class="a" style="left:750px;top:334.5px;width:42px;height:16px;overflow:hidden"><span class="t" style="left:0;top:0;color:#6d6d6d;letter-spacing:-0.412px">Rich Text Format</span></div>
<svg style="left:186px;top:355px" width="16" height="16" viewBox="0 0 16 16"><path d="M4.5 0.5h8l3 3v12h-11z" fill="#f4f8fd" stroke="#8f8f8f" stroke-width="1"/><path d="M12.5 0.5v3h3" fill="none" stroke="#8f8f8f" stroke-width="1"/><path d="M10.500 6.500h4M10.500 9h4M10.500 11.500h4" stroke="#2b579a" stroke-width="1"/><rect x="0" y="4" width="9" height="9" fill="#2b579a"/><text x="4.500" y="11.500" text-anchor="middle" font-family="Liberation Sans, sans-serif" font-weight="bold" font-size="8" fill="#fff">W</text></svg>
<span class="t" style="left:206.00px;top:355.50px;letter-spacing:0.069px;">categoryoutside.rtf</span>
<span class="t" style="left:606.00px;top:355.50px;letter-spacing:-0.188px;color:#6d6d6d;">8/19/2020 12:40 AM</span>
<div class="a" style="left:750px;top:355.5px;width:42px;height:16px;overflow:hidden"><span class="t" style="left:0;top:0;color:#6d6d6d;letter-spacing:-0.412px">Rich Text Format</span></div>
<svg style="left:186px;top:376px" width="16" height="16" viewBox="0 0 16 16"><path d="M4.5 0.5h8l3 3v12h-11z" fill="#f4f8fd" stroke="#8f8f8f" stroke-width="1"/><path d="M12.5 0.5v3h3" fill="none" stroke="#8f8f8f" stroke-width="1"/><path d="M10.500 6.500h4M10.500 9h4M10.500 11.500h4" stroke="#a4373a" stroke-width="1"/><rect x="0" y="4" width="9" height="9" fill="#a4373a"/><text x="4.500" y="11.500" text-anchor="middle" font-family="Liberation Sans, sans-serif" font-weight="bold" font-size="8" fill="#fff">A</text></svg>
<span class="t" style="left:206.00px;top:376.50px;letter-spacing:-0.358px;">Database1.accdb</span>
<span class="t" style="left:606.00px;top:376.50px;letter-spacing:-0.138px;color:#6d6d6d;">3/23/2019 11:47 AM</span>
<div class="a" style="left:750px;top:376.5px;width:42px;height:16px;overflow:hidden"><span class="t" style="left:0;top:0;color:#6d6d6d;letter-spacing:0.069px">Microsoft Access Database</span></div>
<svg style="left:186px;top:397px" width="16" height="16" viewBox="0 0 16 16"><path d="M4.5 0.5h8l3 3v12h-11z" fill="#f4f8fd" stroke="#8f8f8f" stroke-width="1"/><path d="M12.5 0.5v3h3" fill="none" stroke="#8f8f8f" stroke-width="1"/><path d="M10.500 6.500h4M10.500 9h4M10.500 11.500h4" stroke="#2b579a" stroke-width="1"/><rect x="0" y="4" width="9" height="9" fill="#2b579a"/><text x="4.500" y="11.500" text-anchor="middle" font-family="Liberation Sans, sans-serif" font-weight="bold" font-size="8" fill="#fff">W</text></svg>
<span class="t" style="left:206.00px;top:397.50px;letter-spacing:0.067px;">developingwhere.rtf</span>
<span class="t" style="left:606.00px;top:397.50px;letter-spacing:-0.159px;color:#6d6d6d;">4/8/2017 12:23 AM</span>
<div class="a" style="left:750px;top:397.5px;width:42px;height:16px;overflow:hidden"><span class="t" style="left:0;top:0;color:#6d6d6d;letter-spacing:-0.412px">Rich Text Format</span></div>
<svg style="left:186px;top:418px" width="16" height="16" viewBox="0 0 16 16"><path d="M4.5 0.5h8l3 3v12h-11z" fill="#f4f8fd" stroke="#8f8f8f" stroke-width="1"/><path d="M12.5 0.5v3h3" fill="none" stroke="#8f8f8f" stroke-width="1"/><path d="M10.500 6.500h4M10.500 9h4M10.500 11.500h4" stroke="#2b579a" stroke-width="1"/><rect x="0" y="4" width="9" height="9" fill="#2b579a"/><text x="4.500" y="11.500" text-anchor="middle" font-family="Liberation Sans, sans-serif" font-weight="bold" font-size="8" fill="#fff">W</text></svg>
<span class="t" style="left:206.00px;top:418.50px;letter-spacing:0.026px;">levelaid.rtf</span>
<span class="t" style="left:606.00px;top:418.50px;letter-spacing:-0.256px;color:#6d6d6d;">1/30/2018 1:28 PM</span>
<div class="a" style="left:750px;top:418.5px;width:42px;height:16px;overflow:hidden"><span class="t" style="left:0;top:0;color:#6d6d6d;letter-spacing:-0.412px">Rich Text Format</span></div>
<div class="a" style="left:182px;top:437px;width:610px;height:21px;background:#cce8ff;border:1px solid #99d1ff;border-right:none"></div>
<svg style="left:186px;top:439px" width="16" height="16" viewBox="0 0 16 16"><circle cx="12" cy="4" r="3.500" fill="#e9cf8a"/><circle cx="8" cy="8" r="3.800" fill="#dfe9f4" stroke="#6f8fb2" stroke-width="1.600"/><path d="M10.500 11l4 4.500" stroke="#5c7c9e" stroke-width="1.800"/><path d="M5.500 10.500L1.500 14l2 1.500" stroke="#6f9ac8" stroke-width="1.600" fill="none"/></svg>
<span class="t" style="left:206.00px;top:439.50px;letter-spacing:-0.164px;">Oficio 00003243432 Administrativo Acción de tutela - 03948939-002024....</span>
<span class="t" style="left:606.00px;top:439.50px;letter-spacing:-0.256px;color:#6d6d6d;">10/8/2024 1:41 PM</span>
<div class="a" style="left:750px;top:439.5px;width:42px;height:16px;overflow:hidden"><span class="t" style="left:0;top:0;color:#6d6d6d;letter-spacing:0.020px">Application</span></div>
<svg style="left:186px;top:460px" width="16" height="16" viewBox="0 0 16 16"><path d="M4.5 0.5h8l3 3v12h-11z" fill="#f4f8fd" stroke="#8f8f8f" stroke-width="1"/><path d="M12.5 0.5v3h3" fill="none" stroke="#8f8f8f" stroke-width="1"/><path d="M10.500 6.500h4M10.500 9h4M10.500 11.500h4" stroke="#2b579a" stroke-width="1"/><rect x="0" y="4" width="9" height="9" fill="#2b579a"/><text x="4.500" y="11.500" text-anchor="middle" font-family="Liberation Sans, sans-serif" font-weight="bold" font-size="8" fill="#fff">W</text></svg>
<span class="t" style="left:206.00px;top:460.50px;letter-spacing:0.015px;">reportedadvanced.rtf</span>
<span class="t" style="left:606.00px;top:460.50px;letter-spacing:-0.293px;color:#6d6d6d;">5/6/2018 3:19 PM</span>
<div class="a" style="left:750px;top:460.5px;width:42px;height:16px;overflow:hidden"><span class="t" style="left:0;top:0;color:#6d6d6d;letter-spacing:-0.412px">Rich Text Format</span></div>
<svg style="left:186px;top:481px" width="16" height="16" viewBox="0 0 16 16"><path d="M4.5 0.5h8l3 3v12h-11z" fill="#f4f8fd" stroke="#8f8f8f" stroke-width="1"/><path d="M12.5 0.5v3h3" fill="none" stroke="#8f8f8f" stroke-width="1"/><path d="M10.500 6.500h4M10.500 9h4M10.500 11.500h4" stroke="#2b579a" stroke-width="1"/><rect x="0" y="4" width="9" height="9" fill="#2b579a"/><text x="4.500" y="11.500" text-anchor="middle" font-family="Liberation Sans, sans-serif" font-weight="bold" font-size="8" fill="#fff">W</text></svg>
<span class="t" style="left:206.00px;top:481.50px;letter-spacing:-0.024px;">songssingle.rtf</span>
<span class="t" style="left:606.00px;top:481.50px;letter-spacing:-0.159px;color:#6d6d6d;">2/26/2024 6:48 AM</span>
<div class="a" style="left:750px;top:481.5px;width:42px;height:16px;overflow:hidden"><span class="t" style="left:0;top:0;color:#6d6d6d;letter-spacing:-0.412px">Rich Text Format</span></div>
<svg style="left:186px;top:502px" width="16" height="16" viewBox="0 0 16 16"><path d="M4.5 0.5h8l3 3v12h-11z" fill="#f4f8fd" stroke="#8f8f8f" stroke-width="1"/><path d="M12.5 0.5v3h3" fill="none" stroke="#8f8f8f" stroke-width="1"/><path d="M10.500 6.500h4M10.500 9h4M10.500 11.500h4" stroke="#2b579a" stroke-width="1"/><rect x="0" y="4" width="9" height="9" fill="#2b579a"/><text x="4.500" y="11.500" text-anchor="middle" font-family="Liberation Sans, sans-serif" font-weight="bold" font-size="8" fill="#fff">W</text></svg>
<span class="t" style="left:206.00px;top:502.50px;letter-spacing:0.172px;">stuffdvds.rtf</span>
<span class="t" style="left:606.00px;top:502.50px;letter-spacing:-0.189px;color:#6d6d6d;">6/1/2024 8:39 AM</span>
<div class="a" style="left:750px;top:502.5px;width:42px;height:16px;overflow:hidden"><span class="t" style="left:0;top:0;color:#6d6d6d;letter-spacing:-0.412px">Rich Text Format</span></div>
<div class="a" style="left:168px;top:609px;width:624px;height:15.5px;background:#f0f0f0;"></div>
<div class="a" style="left:185px;top:609px;width:467px;height:15.5px;background:#cdcdcd;"></div>
<svg style="left:173px;top:612px" width="6" height="9" viewBox="0 0 6 9"><path d="M5.200 .800L1.500 4.500l3.700 3.700" stroke="#505050" stroke-width="1.600" fill="none"/></svg>
<svg style="left:781px;top:612px" width="6" height="9" viewBox="0 0 6 9"><path d="M.800 .800l3.700 3.700-3.700 3.700" stroke="#505050" stroke-width="1.600" fill="none"/></svg>
<span class="t" style="left:22.00px;top:628.50px;letter-spacing:-0.168px;color:#2b3a55;">12 items</span>
<span class="t" style="left:87.00px;top:628.50px;letter-spacing:-0.179px;color:#2b3a55;">1 item selected</span>
<span class="t" style="left:172.00px;top:628.50px;letter-spacing:-0.382px;color:#2b3a55;">4.52 MB</span>
<div class="a" style="left:744px;top:625px;width:22px;height:22px;background:#c4e7fb;border:1px solid #3f94cc"></div>
<svg style="left:748px;top:630px" width="16" height="13" viewBox="0 0 16 13"><rect x=".500" y="0.5" width="3" height="3" fill="#fff" stroke="#3c3c3c" stroke-width=".800"/><path d="M6 2h3.500M11.500 2h3.500" stroke="#3c3c3c" stroke-width="1"/><rect x=".500" y="5" width="3" height="3" fill="#fff" stroke="#3c3c3c" stroke-width=".800"/><path d="M6 6.5h3.500M11.500 6.5h3.500" stroke="#3c3c3c" stroke-width="1"/><rect x=".500" y="9.5" width="3" height="3" fill="#fff" stroke="#3c3c3c" stroke-width=".800"/><path d="M6 11h3.500M11.500 11h3.500" stroke="#3c3c3c" stroke-width="1"/></svg>
<svg style="left:770px;top:630px" width="14" height="11" viewBox="0 0 14 11"><rect x=".500" y=".500" width="13" height="10" fill="#fff" stroke="#6a6a6a" stroke-width="1"/><rect x="2" y="2" width="10" height="7" fill="#7fb2dc"/><path d="M2 9l3.500-4 3 2.500L12 5v4z" fill="#2c5d8a"/></svg>
<!-- TASKBAR -->
<div class="a" style="left:0px;top:680px;width:1280px;height:40px;background:linear-gradient(90deg,#04202c 0%,#071a2a 45%,#0a1424 100%);"></div>
<svg style="left:16px;top:692px" width="16" height="16" viewBox="0 0 16 16"><path d="M0 2.300L6.800 1.300V7.600H0zM7.600 1.200L16 0v7.600H7.600zM0 8.400h6.800v6.300L0 13.700zM7.600 8.400H16V16l-8.400-1.200z" fill="#fff"/></svg>
<div class="a" style="left:48px;top:680px;width:288px;height:40px;background:#f2f2f2;border-top:1px solid #fafafa"></div>
<svg style="left:60px;top:690px" width="17" height="18" viewBox="0 0 17 18"><circle cx="10.500" cy="6.500" r="5.200" stroke="#222" stroke-width="1.300" fill="none"/><path d="M6.800 10.500L.800 17" stroke="#222" stroke-width="1.400"/></svg>
<span class="t" style="left:88.00px;top:690.00px;letter-spacing:-0.243px;font-size:15px;line-height:20px;height:20px;color:#2b2b2b;">Type here to search</span>
<svg style="left:308px;top:681px;overflow:hidden" width="28" height="30" viewBox="0 0 28 30"><path d="M28 0H-3L2 6 6 13 13 19 20 24 28 28z" fill="#ece6f8"/><g stroke="#bfaee0" stroke-width="1" fill="none"><path d="M28 0L21.7 35.5"/><path d="M28 0L11.1 31.8"/><path d="M28 0L2.1 25.0"/><path d="M28 0L-4.4 15.8"/><path d="M28 0L-7.6 5.0"/><path d="M28.0 9.0 L26.5 8.2 L24.1 7.4 L22.0 5.8 L20.5 3.7 L19.7 1.2 L19.0 0.0"/><path d="M28.0 16.0 L25.4 14.7 L21.0 13.1 L17.3 10.3 L14.6 6.5 L13.3 2.1 L12.0 0.0"/><path d="M28.0 23.0 L24.3 21.1 L18.0 18.9 L12.6 14.9 L8.8 9.4 L6.8 3.0 L5.0 0.0"/><path d="M28.0 30.0 L23.2 27.5 L14.9 24.6 L7.9 19.4 L2.9 12.2 L0.4 3.9 L-2.0 0.0"/></g></svg>
<svg style="left:260.5px;top:696.5px" width="16" height="17" viewBox="0 0 16 17"><defs><linearGradient id="lf" x1="0" y1="0" x2="1" y2="1"><stop offset="0" stop-color="#f6d52a"/><stop offset="1" stop-color="#f08a1c"/></linearGradient></defs><path d="M2 1c3-1 5 1 6 3 1-2 3-3 5-3-1 2-1 4 0 5 1 0 2 0 3 1-2 1-3 2-3 4-2 0-3 1-3 3l-1 2c-1-2-2-3-4-3 0-2-2-3-4-3 1-1 3-2 3-4C4 5 3 3 2 1z" fill="url(#lf)"/></svg>
<svg style="left:279px;top:684px" width="34" height="33" viewBox="0 0 34 33"><defs><radialGradient id="pk" cx=".45" cy=".3" r=".8"><stop offset="0" stop-color="#fb8c2a"/><stop offset=".55" stop-color="#ee5f1a"/><stop offset="1" stop-color="#b8321a"/></radialGradient></defs><path d="M15 10c0-3-1-6-5.500-7.500L11 0c5 1 7 4 8 9z" fill="#6b9a32"/><ellipse cx="17" cy="20" rx="17" ry="12.500" fill="url(#pk)"/><path d="M7.500 16q2-3.500 4.500-.500M21 15.500q2.500-3 4.500 .500" stroke="#4a1608" stroke-width="2.200" fill="none" stroke-linecap="round"/><path d="M7 21q10 7 20 0q-2 7-10 7t-10-7z" fill="#5a1a08"/><path d="M8 23.500q9 8 18 0" stroke="#ffb45a" stroke-width="1.200" fill="none"/><path d="M13 22.800l1.500 1.800 1.500-1.500 1.500 1.500 1.500-1.800" stroke="#ee5f1a" stroke-width="1.300" fill="none"/></svg>
<svg style="left:352px;top:692px" width="16" height="16" viewBox="0 0 16 16"><path d="M.800 .800h10.500M.800 15.200h10.500" stroke="#fff" stroke-width="1.400"/><rect x="1.500" y="4" width="9" height="8" stroke="#fff" stroke-width="1.400" fill="none"/><path d="M14.500 .500v4M14.500 11.500v4" stroke="#fff" stroke-width="1.400"/><rect x="13" y="6" width="3" height="3.500" fill="#fff"/></svg>
<svg style="left:399px;top:688px" width="24" height="24" viewBox="0 0 24 24"><defs><linearGradient id="eg1" x1="0" y1="0" x2="1" y2="1"><stop offset="0" stop-color="#35c1f1"/><stop offset="1" stop-color="#0c59a4"/></linearGradient><linearGradient id="eg2" x1="0" y1="0" x2="1" y2="0"><stop offset="0" stop-color="#2fc0e0"/><stop offset="1" stop-color="#5fdc6a"/></linearGradient></defs><circle cx="12" cy="12" r="12" fill="url(#eg1)"/><path d="M.500 10C2 4 7 0 13 0c6 0 11 4.500 11 10.500 0 3.500-2.500 5.500-5.500 5.500-2.500 0-4-1-4-2.200 .800-.800 1.200-1.800 1.200-3C15.700 8 13.500 6 10.500 6 6 6 2 8 .500 10z" fill="url(#eg2)"/><path d="M9.500 13c-.500 4 3 7.500 8 7.500 2 0 4-.600 5.500-1.800C21 22 17 24 12.500 24 6 24 1 19.500 .300 13.500 2 9.500 7 9 9.500 13z" fill="#1468b8"/><path d="M14.500 11.500c0 1.500-.500 2-1 2.500 0 1.500 2 2.500 4.500 2.500 3 0 5.500-2 5.800-5z" fill="#071a2a" opacity=".85"/></svg>
<div class="a" style="left:436px;top:680px;width:48px;height:40px;background:#33444f;"></div>
<div class="a" style="left:436px;top:718px;width:48px;height:2px;background:#86b9ea;"></div>
<svg style="left:449px;top:690px" width="22" height="18" viewBox="0 0 22 18"><path d="M0 2h8l2 2h12v13H0z" fill="#f3b73d"/><path d="M0 5.500h22V18H0z" fill="#fbd968"/><path d="M5 18v-6.500h12V18h-3.500v-3h-5v3z" fill="#3b86d8"/><path d="M8.500 15h5v3h-5z" fill="#f3b73d"/></svg>
<svg style="left:497px;top:687.5px" width="24" height="24" viewBox="0 0 24 24"><defs><radialGradient id="ff" cx=".6" cy=".25" r=".9"><stop offset="0" stop-color="#ffe43a"/><stop offset=".4" stop-color="#ff9a1f"/><stop offset=".8" stop-color="#f6334d"/><stop offset="1" stop-color="#c81f8a"/></radialGradient></defs><path d="M12 2c1.500 1 2.500 2 3 3.500C16 4 16 2 15.500 0c3 2 4.500 4.500 5 7 2 2 3.500 5 3.500 8 0 5.500-5 9-12 9S0 20 0 14C0 10 1.500 7 4 5c0 1.500.500 2.500 1.500 3.500C6 6 8.500 3 12 2z" fill="url(#ff)"/><circle cx="12" cy="13.500" r="5.500" fill="#8a45e0"/><path d="M7 11c2-2.500 6-3 8.500-1-2-.500-3 .500-3 2s1.500 2.500 3.500 2c-1.500 2.500-5 3-7.500 1.500S6 12.500 7 11z" fill="#5b2fc0" opacity=".7"/></svg>
<svg style="left:546px;top:688px" width="24" height="24" viewBox="0 0 24 24"><circle cx="12" cy="12" r="12" fill="#fff"/><path d="M12 12L1.600 6A12 12 0 0 1 22.400 6z" fill="#e33b2e"/><path d="M12 12L22.400 6A12 12 0 0 1 12 24z" fill="#fbc116"/><path d="M12 12L12 24A12 12 0 0 1 1.600 6z" fill="#2da94f"/><path d="M12 6h10.400L17.200 15z" fill="#e33b2e"/><path d="M17.200 15L12 24 6.800 15z" fill="#fbc116"/><path d="M6.800 15L1.600 6 12 6z" fill="#2da94f"/><circle cx="12" cy="12" r="5.600" fill="#fff"/><circle cx="12" cy="12" r="4.400" fill="#3f7ee8"/></svg>
<div class="a" style="left:538px;top:718px;width:40px;height:2px;background:#86b9ea;"></div>
<svg style="left:595px;top:688.5px" width="24" height="22" viewBox="0 0 24 22"><rect x="0" y="1" width="24" height="7" rx="1" fill="#b33a3a"/><rect x="0" y="8" width="24" height="7" fill="#4a63b8"/><rect x="0" y="15" width="24" height="7" rx="1" fill="#4f9f3f"/><path d="M0 4.500h24M0 11.500h24M0 18.500h24" stroke="#00000030" stroke-width="1"/><rect x="9" y="0" width="6" height="22" fill="#d9a43a"/><rect x="8" y="8" width="8" height="7" fill="#f0e0c0" stroke="#6a4a1a" stroke-width="1"/><rect x="10.500" y="10" width="3" height="3" fill="#6a4a1a"/></svg>
<div class="a" style="left:587px;top:718px;width:40px;height:2px;background:#86b9ea;"></div>
<svg style="left:1073px;top:696.5px" width="12" height="7" viewBox="0 0 12 7"><path d="M.800 6.300L6 1l5.200 5.300" stroke="#fff" stroke-width="1.400" fill="none"/></svg>
<svg style="left:1097px;top:692px" width="12" height="16.5" viewBox="0 0 12 16.5"><rect x="1.500" y="5" width="7" height="6.500" rx="1.500" stroke="#fff" stroke-width="1.300" fill="none"/><path d="M8.500 7.500l3-1.500v4.500l-3-1.500z" stroke="#fff" stroke-width="1" fill="none"/><path d="M2.500 2.500a5.500 5.500 0 0 1 7 0M2.500 14a5.500 5.500 0 0 0 7 0" stroke="#fff" stroke-width="1.200" fill="none"/></svg>
<svg style="left:1119px;top:693px" width="16" height="14" viewBox="0 0 16 14"><rect x="3.500" y="1.500" width="12" height="8.500" stroke="#fff" stroke-width="1.200" fill="none"/><path d="M9.500 10v3M6 13.500h7" stroke="#fff" stroke-width="1.200"/><rect x=".500" y=".500" width="4.500" height="4" fill="#0a1726" stroke="#fff" stroke-width="1"/><path d="M2.700 4.500v5h3" stroke="#fff" stroke-width="1" fill="none"/></svg>
<svg style="left:1142.5px;top:693px" width="17" height="14" viewBox="0 0 17 14"><path d="M.700 4.500h3L7.500 1v12L3.700 9.500H.700z" stroke="#fff" stroke-width="1.100" fill="none"/><path d="M10 4.500a3.500 3.500 0 0 1 0 5M12 2.500a6 6 0 0 1 0 9M14 .800a8.500 8.500 0 0 1 0 12.400" stroke="#fff" stroke-width="1.100" fill="none"/></svg>
<span class="t" style="left:1170.75px;top:682.70px;letter-spacing:-0.273px;color:#fff;">12:39 AM</span>
<span class="t" style="left:1166.25px;top:700.60px;letter-spacing:-0.164px;color:#fff;">10/11/2024</span>
<svg style="left:1239px;top:692px" width="16" height="16" viewBox="0 0 16 16"><path d="M.700 .700h14.600v11H10L7.800 14.500 5.600 11.700H.700z" stroke="#fff" stroke-width="1.300" fill="none"/></svg>
<div class="a" style="left:1275px;top:680px;width:1px;height:40px;background:#5a6470;"></div>
</div>
</body>
</html>
